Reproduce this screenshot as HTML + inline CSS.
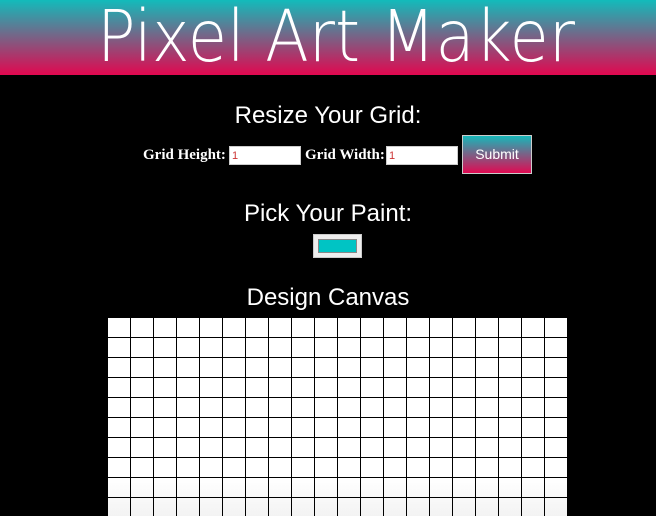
<!DOCTYPE html>
<html><head><style>
body{margin:0;background:#000;width:656px;height:516px;overflow:hidden;position:relative;font-family:"Liberation Sans",sans-serif;color:#fff}
.hdr{position:absolute;left:0;top:0;width:656px;height:75px;background:linear-gradient(#12bbbb,#e2074f);overflow:hidden}
.hdr h1{margin:0;position:absolute;left:7px;width:656px;top:-3px;text-align:center;font-size:71px;line-height:80px;font-family:"DejaVu Sans","Liberation Sans",sans-serif;font-weight:200;transform:scaleX(0.9);transform-origin:338px 0}
.h2{position:absolute;left:0;width:656px;text-align:center;font-size:24px;font-weight:normal}
.lbl{position:absolute;font-family:"Liberation Serif",serif;font-size:15px;font-weight:bold;top:147px}
.inp{position:absolute;background:#fff;border:1px solid #ccc;top:146px;color:#c33;font-size:11px;line-height:18px;box-sizing:border-box;padding-left:2px;height:19px;width:72px}
.btn{position:absolute;left:462px;top:135px;width:70px;height:39px;box-sizing:border-box;border:1px solid #ccc;background:linear-gradient(#17b7b9,#e10a52);text-align:center;line-height:37px;font-size:14px}
.col{position:absolute;left:313px;top:234px;width:49px;height:24px;box-sizing:border-box;background:#eee;border:1px solid #ccc}
.col div{position:absolute;left:4px;top:4px;right:4px;bottom:4px;background:#00c4c4;border:1px solid #888}
.grid{position:absolute;left:108px;top:318px;width:459px;height:198px;background:repeating-linear-gradient(to right,transparent 0 22px,#000 22px 23px),repeating-linear-gradient(to bottom,transparent 0 19px,#000 19px 20px),linear-gradient(#fff 0,#fff 160px,#f3f3f3 198px)}
</style></head><body>
<div class="hdr"><h1>Pixel Art Maker</h1></div>
<div class="h2" style="top:102px">Resize Your Grid:</div>
<div class="lbl" style="left:143px">Grid Height:</div>
<div class="inp" style="left:229px">1</div>
<div class="lbl" style="left:305px">Grid Width:</div>
<div class="inp" style="left:386px">1</div>
<div class="btn">Submit</div>
<div class="h2" style="top:200px">Pick Your Paint:</div>
<div class="col"><div></div></div>
<div class="h2" style="top:284px">Design Canvas</div>
<div class="grid"></div>
</body></html>
